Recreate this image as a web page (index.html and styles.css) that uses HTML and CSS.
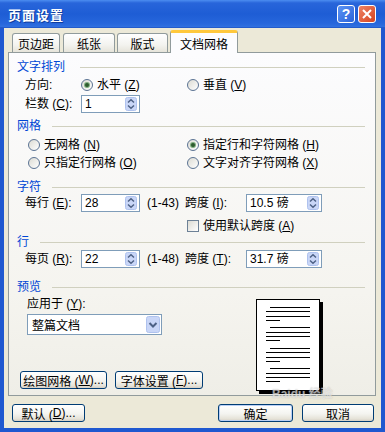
FILE: index.html
```html
<!DOCTYPE html>
<html lang="zh-CN">
<head>
    <meta charset="UTF-8">
    <meta name="viewport" content="width=device-width, initial-scale=1.0">
    <title>页面设置</title>
    <link rel="stylesheet" href="styles.css">
</head>
<body>
    <div class="window">
        <div class="titlebar">
            <span class="title">页面设置</span>
            <div class="caption">
                <span class="cap-btn help">?</span>
                <span class="cap-btn close">
                    <svg width="10" height="10" viewBox="0 0 10 10"><path d="M1 1 L9 9 M9 1 L1 9" stroke="#fff" stroke-width="2"/></svg>
                </span>
            </div>
        </div>

        <div class="frame">
            <!-- タブ -->
            <div class="tabs">
                <div class="tab t1">页边距</div>
                <div class="tab t2">纸张</div>
                <div class="tab t3">版式</div>
                <div class="tab active">文档网格</div>
            </div>

            <div class="panel">
                <div class="grp wide-gap">文字排列</div>
                <div class="row mt2">
                    <span class="lbl">方向:</span>
                    <span class="opt w106"><i class="radio on"></i><span>水平 (<u>Z</u>)</span></span>
                    <span class="opt"><i class="radio"></i><span>垂直 (<u>V</u>)</span></span>
                </div>
                <div class="row mt1">
                    <span class="lbl">栏数 (<u>C</u>):</span>
                    <span class="field num"><span class="val">1</span><svg class="spin" width="12" height="14" viewBox="0 0 12 14"><rect x="0.5" y="0.5" width="11" height="13" rx="2" fill="#C9D6F7" stroke="#AFC2EE"/><path d="M3 5.5 L6 2.8 L9 5.5 M3 8.5 L6 11.2 L9 8.5" fill="none" stroke="#4D6185" stroke-width="1.5"/></svg></span>
                </div>

                <div class="grp mt6">网格</div>
                <div class="row opts mt3">
                    <span class="opt w159"><i class="radio"></i><span>无网格 (<u>N</u>)</span></span>
                    <span class="opt"><i class="radio on"></i><span>指定行和字符网格 (<u>H</u>)</span></span>
                </div>
                <div class="row opts">
                    <span class="opt w159"><i class="radio"></i><span>只指定行网格 (<u>O</u>)</span></span>
                    <span class="opt"><i class="radio"></i><span>文字对齐字符网格 (<u>X</u>)</span></span>
                </div>

                <div class="grp mt8">字符</div>
                <div class="row">
                    <span class="lbl">每行 (<u>E</u>):</span>
                    <span class="field num"><span class="val">28</span><svg class="spin" width="12" height="14" viewBox="0 0 12 14"><rect x="0.5" y="0.5" width="11" height="13" rx="2" fill="#C9D6F7" stroke="#AFC2EE"/><path d="M3 5.5 L6 2.8 L9 5.5 M3 8.5 L6 11.2 L9 8.5" fill="none" stroke="#4D6185" stroke-width="1.5"/></svg></span>
                    <span class="range">(1-43)</span>
                    <span class="lbl2">跨度 (<u>I</u>):</span>
                    <span class="field pitch"><span class="val">10.5 磅</span><svg class="spin" width="12" height="14" viewBox="0 0 12 14"><rect x="0.5" y="0.5" width="11" height="13" rx="2" fill="#C9D6F7" stroke="#AFC2EE"/><path d="M3 5.5 L6 2.8 L9 5.5 M3 8.5 L6 11.2 L9 8.5" fill="none" stroke="#4D6185" stroke-width="1.5"/></svg></span>
                </div>
                <div class="row chk-row mt5">
                    <span class="opt"><i class="check"></i><span>使用默认跨度 (<u>A</u>)</span></span>
                </div>

                <div class="grp">行</div>
                <div class="row mt1">
                    <span class="lbl">每页 (<u>R</u>):</span>
                    <span class="field num"><span class="val">22</span><svg class="spin" width="12" height="14" viewBox="0 0 12 14"><rect x="0.5" y="0.5" width="11" height="13" rx="2" fill="#C9D6F7" stroke="#AFC2EE"/><path d="M3 5.5 L6 2.8 L9 5.5 M3 8.5 L6 11.2 L9 8.5" fill="none" stroke="#4D6185" stroke-width="1.5"/></svg></span>
                    <span class="range">(1-48)</span>
                    <span class="lbl2">跨度 (<u>T</u>):</span>
                    <span class="field pitch"><span class="val">31.7 磅</span><svg class="spin" width="12" height="14" viewBox="0 0 12 14"><rect x="0.5" y="0.5" width="11" height="13" rx="2" fill="#C9D6F7" stroke="#AFC2EE"/><path d="M3 5.5 L6 2.8 L9 5.5 M3 8.5 L6 11.2 L9 8.5" fill="none" stroke="#4D6185" stroke-width="1.5"/></svg></span>
                </div>

                <div class="grp mt12">预览</div>
                <div class="preview">
                    <div class="pv-left">
                        <div class="apply">应用于 (<u>Y</u>):</div>
                        <div class="select">
                            <span>整篇文档</span>
                            <svg class="drop" width="14" height="17" viewBox="0 0 14 17"><rect x="0.5" y="0.5" width="13" height="16" rx="2" fill="#C9D6F7" stroke="#AFC2EE"/><path d="M3.5 7 L7 10.5 L10.5 7" fill="none" stroke="#4D6185" stroke-width="2"/></svg>
                        </div>
                        <div class="pv-btns">
                            <span class="btn b87">绘图网格 (<u>W</u>)...</span>
                            <span class="btn b88">字体设置 (<u>F</u>)...</span>
                        </div>
                    </div>
                    <div class="pv-right">
                        <div class="page">
                            <div class="para"><i class="ln ind"></i><i class="ln"></i><i class="ln"></i><i class="ln sh"></i></div>
                            <div class="para"><i class="ln ind"></i><i class="ln"></i><i class="ln"></i><i class="ln sh"></i></div>
                            <div class="para"><i class="ln ind"></i><i class="ln"></i><i class="ln"></i><i class="ln sh"></i></div>
                            <div class="para"><i class="ln ind"></i><i class="ln"></i><i class="ln"></i><i class="ln sh"></i></div>
                        </div>
                    </div>
                </div>
            </div>

            <div class="footer">
                <span class="btn b73">默认 (<u>D</u>)...</span>
                <div class="right">
                    <span class="btn b75 default">确定</span>
                    <span class="btn b72">取消</span>
                </div>
            </div>
        </div>

        <span class="watermark">Baidu 经验</span>
    </div>
</body>
</html>
```

FILE: styles.css
```css
* {
    box-sizing: border-box;
}
body {
    margin: 0;
    width: 385px;
    height: 432px;
    overflow: hidden;
    font-family: "Liberation Sans", "Noto Sans CJK SC", sans-serif;
    font-size: 12px;
    color: #000;
    background: #ECE9D8;
}
u {
    text-decoration: underline;
    text-underline-offset: 1px;
}
.window {
    position: relative;
    width: 385px;
    height: 432px;
    display: flex;
    flex-direction: column;
}
.titlebar {
    height: 28px;
    flex: none;
    display: flex;
    align-items: center;
    justify-content: space-between;
    padding: 0 9px 0 8px;
    background: linear-gradient(#4C8DF0 0, #2865DA 3px, #1E5DD5 50%, #2767DC 85%, #3070E0 95%, #1B50C0 100%);
}
.title {
    color: #fff;
    font-family: "Noto Sans CJK SC", sans-serif;
    font-weight: bold;
    font-size: 13px;
    letter-spacing: 1px;
    text-shadow: 1px 1px 0 #0F3D9E;
}
.caption {
    display: flex;
    gap: 3px;
}
.cap-btn {
    width: 18px;
    height: 18px;
    border: 1px solid #fff;
    border-radius: 3px;
    display: flex;
    align-items: center;
    justify-content: center;
    color: #fff;
    font-weight: bold;
    font-size: 14px;
}
.help {
    background: linear-gradient(135deg, #5C94F5, #2A62D8);
}
.close {
    background: linear-gradient(135deg, #EE8466, #D6431F);
}
.frame {
    flex: 1;
    display: flex;
    flex-direction: column;
    border: 4px solid #1F58D0;
    border-top: 0;
    background: #ECE9D8;
}
.tabs {
    height: 24px;
    flex: none;
    display: flex;
    align-items: flex-end;
    padding-left: 8px;
}
.tab {
    height: 19px;
    border: 1px solid #919B9C;
    border-bottom: 0;
    border-radius: 3px 3px 0 0;
    background: linear-gradient(#FFFFFF, #F3F3EF 60%, #E6E4DA);
    display: flex;
    align-items: center;
    justify-content: center;
    padding-top: 1px;
}
.t1 {
    width: 48px;
    margin-right: 3px;
}
.t2 {
    width: 52px;
    margin-right: 2px;
}
.t3 {
    width: 51px;
    margin-right: 2px;
}
.tab.active {
    width: 68px;
    height: 23px;
    margin-bottom: -1px;
    position: relative;
    z-index: 1;
    border-top: 3px solid #FFC83C;
    background: #FCFCFE;
    padding-top: 0;
}
.panel {
    height: 344px;
    flex: none;
    margin: 0 5px 0 4px;
    border: 1px solid #919B9C;
    background: linear-gradient(#FCFCFE, #F5F4EF 70%, #EFEEE7);
    padding: 7px 10px 0 0;
}
.grp {
    display: flex;
    align-items: center;
    height: 14px;
    line-height: 14px;
    padding-left: 8px;
    color: #0046D5;
}
.grp::after {
    content: "";
    flex: 1;
    border-top: 1px solid #D0D0BF;
    margin-left: 11px;
}
.grp.wide-gap::after {
    margin-left: 15px;
}
.mt1 { margin-top: 1px; }
.mt2 { margin-top: 2px; }
.mt3 { margin-top: 3px; }
.mt5 { margin-top: 5px; }
.mt6 { margin-top: 6px; }
.mt8 { margin-top: 8px; }
.mt12 { margin-top: 12px; }
.row {
    display: flex;
    align-items: center;
    height: 18px;
    line-height: 18px;
    padding-left: 16px;
    white-space: nowrap;
}
.row.opts {
    padding-left: 19px;
}
.row.chk-row {
    padding-left: 178px;
}
.lbl {
    width: 56px;
}
.lbl2 {
    width: 61px;
}
.opt {
    display: flex;
    align-items: center;
    gap: 4px;
}
.w106 {
    width: 106px;
}
.w159 {
    width: 159px;
}
.radio {
    width: 12px;
    height: 12px;
    border: 1px solid #5B7393;
    border-radius: 50%;
    background: linear-gradient(135deg, #DCDBD3, #FFFFFF);
    display: flex;
    align-items: center;
    justify-content: center;
}
.radio.on::after {
    content: "";
    width: 4px;
    height: 4px;
    border-radius: 50%;
    background: #2F5A2F;
    box-shadow: 0 0 0 1px #7FAF7F;
}
.check {
    width: 12px;
    height: 12px;
    border: 1px solid #6D8196;
    background: linear-gradient(135deg, #DCDBD3, #FFFFFF);
}
.field {
    height: 18px;
    border: 1px solid #7F9DB9;
    background: #fff;
    display: flex;
    align-items: center;
    justify-content: space-between;
    padding-left: 3px;
    padding-right: 2px;
}
.num {
    width: 59px;
}
.pitch {
    width: 76px;
}
.range {
    width: 38px;
    margin-left: 7px;
}
.preview {
    display: flex;
}
.pv-left {
    width: 247px;
    padding-left: 11px;
}
.apply {
    margin: 3px 0 0 7px;
    height: 14px;
    line-height: 14px;
}
.select {
    width: 135px;
    height: 21px;
    margin: 3px 0 0 7px;
    border: 1px solid #7F9DB9;
    background: #fff;
    display: flex;
    align-items: center;
    justify-content: space-between;
    padding: 0 1px 0 4px;
}
.pv-btns {
    display: flex;
    gap: 8px;
    margin-top: 36px;
}
.btn {
    height: 18px;
    border: 1px solid #003C74;
    border-radius: 3px;
    background: linear-gradient(#FFFFFF, #F4F4F0 55%, #E6E3D9 85%, #D6D0C5);
    display: flex;
    align-items: center;
    justify-content: center;
    white-space: nowrap;
}
.b87 { width: 87px; }
.b88 { width: 88px; }
.b73 { width: 73px; }
.b75 { width: 75px; }
.b72 { width: 72px; }
.btn.default {
    box-shadow: inset 0 0 0 1px #B9CFF5;
}
.pv-right {
    padding-top: 5px;
}
.page {
    width: 64px;
    height: 92px;
    border: 1px solid #000;
    background: #fff;
    box-shadow: 3px 3px 0 #000;
    padding: 7px 0 0 9px;
    display: flex;
    flex-direction: column;
    gap: 6.6px;
}
.para {
    display: flex;
    flex-direction: column;
    gap: 3.3px;
}
.ln {
    display: block;
    width: 44px;
    height: 1px;
    background: #000;
}
.ln.ind {
    width: 40px;
    margin-left: 4px;
}
.ln.sh {
    width: 14px;
}
.footer {
    display: flex;
    justify-content: space-between;
    margin-top: 8px;
    padding: 0 7px 0 8px;
}
.footer .right {
    display: flex;
    gap: 9px;
}
.watermark {
    position: absolute;
    left: 272px;
    top: 388px;
    line-height: 12px;
    font-weight: bold;
    font-size: 12px;
    color: rgba(255, 255, 255, 0.55);
    text-shadow: 0 0 1px rgba(140, 140, 140, 0.5);
}
```
